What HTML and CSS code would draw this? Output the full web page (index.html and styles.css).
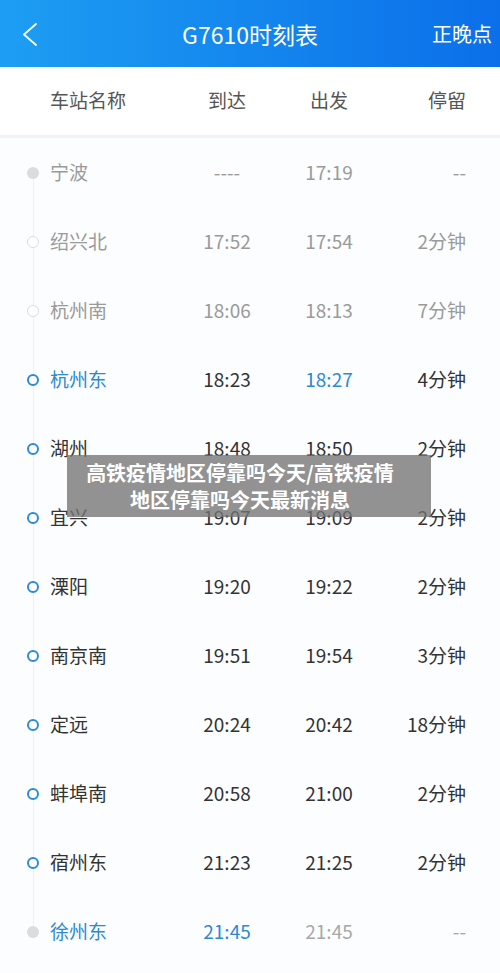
FILE: index.html
```html
<!DOCTYPE html>
<html lang="zh-CN">
<head>
<meta charset="UTF-8">
<meta name="viewport" content="width=device-width, initial-scale=1.0">
<title>G7610时刻表</title>
<link rel="stylesheet" href="styles.css">
</head>
<body>
<div id="page">
    <header class="topbar">
        <a href="javascript:;" class="back">
            <svg width="20" height="24" viewBox="0 0 20 24"><polyline points="14,2 2,12.5 14,23" fill="none" stroke="#fff" stroke-width="1.8" stroke-linecap="round" stroke-linejoin="round"/></svg>
        </a>
        <h1 class="title">G7610时刻表</h1>
        <a href="javascript:;" class="late">正晚点</a>
    </header>
    <div class="thead">
        <span></span>
        <span class="name">车站名称</span>
        <span class="mid">到达</span>
        <span class="mid">出发</span>
        <span class="stop">停留</span>
    </div>
    <ul id="list">
        <li class="row first passed">
            <span class="dot"><i class="fill"></i></span>
            <span class="name">宁波</span>
            <span class="mid">----</span>
            <span class="mid">17:19</span>
            <span class="stop">--</span>
        </li>
        <li class="row passed">
            <span class="dot"><i class="ring-gray"></i></span>
            <span class="name">绍兴北</span>
            <span class="mid">17:52</span>
            <span class="mid">17:54</span>
            <span class="stop">2分钟</span>
        </li>
        <li class="row passed">
            <span class="dot"><i class="ring-gray"></i></span>
            <span class="name">杭州南</span>
            <span class="mid">18:06</span>
            <span class="mid">18:13</span>
            <span class="stop">7分钟</span>
        </li>
        <li class="row">
            <span class="dot"><i class="ring"></i></span>
            <span class="name blue">杭州东</span>
            <span class="mid">18:23</span>
            <span class="mid blue">18:27</span>
            <span class="stop">4分钟</span>
        </li>
        <li class="row">
            <span class="dot"><i class="ring"></i></span>
            <span class="name">湖州</span>
            <span class="mid">18:48</span>
            <span class="mid">18:50</span>
            <span class="stop">2分钟</span>
        </li>
        <li class="row">
            <span class="dot"><i class="ring"></i></span>
            <span class="name">宜兴</span>
            <span class="mid">19:07</span>
            <span class="mid">19:09</span>
            <span class="stop">2分钟</span>
        </li>
        <li class="row">
            <span class="dot"><i class="ring"></i></span>
            <span class="name">溧阳</span>
            <span class="mid">19:20</span>
            <span class="mid">19:22</span>
            <span class="stop">2分钟</span>
        </li>
        <li class="row">
            <span class="dot"><i class="ring"></i></span>
            <span class="name">南京南</span>
            <span class="mid">19:51</span>
            <span class="mid">19:54</span>
            <span class="stop">3分钟</span>
        </li>
        <li class="row">
            <span class="dot"><i class="ring"></i></span>
            <span class="name">定远</span>
            <span class="mid">20:24</span>
            <span class="mid">20:42</span>
            <span class="stop">18分钟</span>
        </li>
        <li class="row">
            <span class="dot"><i class="ring"></i></span>
            <span class="name">蚌埠南</span>
            <span class="mid">20:58</span>
            <span class="mid">21:00</span>
            <span class="stop">2分钟</span>
        </li>
        <li class="row">
            <span class="dot"><i class="ring"></i></span>
            <span class="name">宿州东</span>
            <span class="mid">21:23</span>
            <span class="mid">21:25</span>
            <span class="stop">2分钟</span>
        </li>
        <li class="row last">
            <span class="dot"><i class="fill"></i></span>
            <span class="name blue">徐州东</span>
            <span class="mid blue">21:45</span>
            <span class="mid gray">21:45</span>
            <span class="stop gray">--</span>
        </li>
    </ul>
    <div class="caption">高铁疫情地区停靠吗今天/高铁疫情<br>地区停靠吗今天最新消息</div>
</div>
</body>
</html>
```

FILE: styles.css
```css
body {
    margin: 0;
    background: #fcfdfe;
    font-family: "Noto Sans CJK SC", "Noto Sans", sans-serif;
}
ul {
    margin: 0;
    padding: 0;
    list-style: none;
}
#page {
    position: relative;
    width: 500px;
    height: 973px;
    overflow: hidden;
}
.topbar {
    display: grid;
    grid-template-columns: 1fr auto 1fr;
    align-items: center;
    height: 67px;
    background: linear-gradient(90deg, #1d9ef3, #0b6fe9);
    color: #fff;
}
.back {
    display: flex;
    padding-left: 22px;
    padding-top: 1px;
}
.title {
    margin: 0;
    font-size: 23px;
    font-weight: normal;
}
.late {
    justify-self: end;
    padding-right: 8px;
    font-size: 20px;
    color: #fff;
    text-decoration: none;
}
.thead {
    display: grid;
    grid-template-columns: 50px 127px 100px 104px 85px;
    align-items: center;
    height: 68px;
    background: #fff;
    border-bottom: 3px solid #f0f2f4;
    font-size: 19px;
    color: #555;
}
.row {
    display: grid;
    grid-template-columns: 50px 127px 100px 104px 85px;
    align-items: center;
    height: 69px;
    font-size: 19px;
    color: #333;
}
.name,
.mid,
.stop {
    padding-bottom: 3px;
}
.name {
    text-align: left;
}
.mid {
    text-align: center;
}
.stop {
    text-align: right;
}
.dot {
    display: flex;
    align-items: center;
    align-self: stretch;
    padding-left: 27px;
    background: linear-gradient(#eef0f2, #eef0f2) no-repeat 33px 0 / 1px 100%;
}
.first .dot {
    background-position: 33px 100%;
    background-size: 1px 50%;
}
.last .dot {
    background-position: 33px 0;
    background-size: 1px 50%;
}
.dot i {
    display: block;
    box-sizing: border-box;
    width: 12px;
    height: 12px;
    border-radius: 50%;
}
.fill {
    background: #dcdcdc;
}
.ring-gray {
    background: #fff;
    border: 1.5px solid #dcdcdc;
}
.ring {
    background: #fff;
    border: 2.5px solid #2b8bd6;
}
.passed {
    color: #9a9a9a;
}
.blue {
    color: #2b8ad2;
}
.gray {
    color: #a8a8a8;
}
.caption {
    position: absolute;
    left: 67px;
    top: 455px;
    width: 364px;
    height: 62px;
    box-sizing: border-box;
    padding: 4px 18px 0 0;
    background: rgba(115, 115, 115, .78);
    color: #fff;
    font-size: 20px;
    font-weight: bold;
    line-height: 27px;
    text-align: center;
}
```
